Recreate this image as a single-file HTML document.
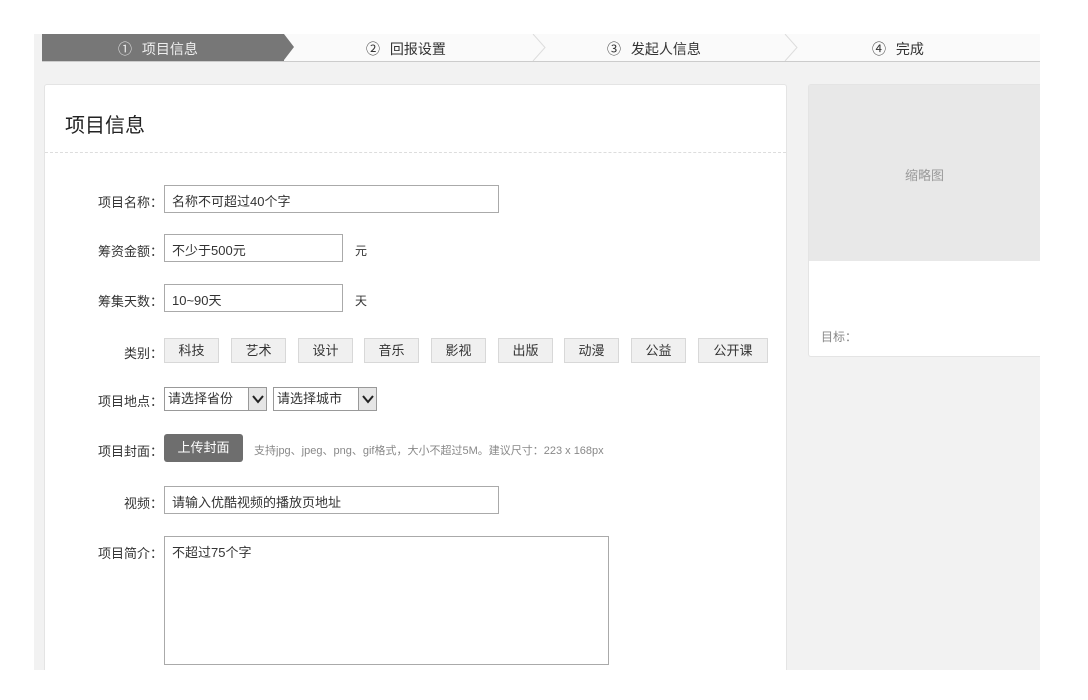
<!DOCTYPE html>
<html><head><meta charset="utf-8"><style>
*{box-sizing:border-box;margin:0;padding:0}
body{width:1088px;height:700px;background:#fff;font-family:"Liberation Sans","Noto Sans CJK SC",sans-serif;color:#333;position:relative;overflow:hidden;font-size:13px}
.bg{position:absolute;left:34px;top:34px;width:1006px;height:636px;background:#f2f2f2}
.steps{position:absolute;left:42px;top:34px;width:998px;height:28px;background:#fafafa;border-bottom:1px solid #ccc}
.act{position:absolute;left:0;top:0;width:242px;height:27px;background:#777}
.tip{position:absolute;left:242px;top:0;width:0;height:0;border-top:13.5px solid transparent;border-bottom:13.5px solid transparent;border-left:10px solid #777}
.st{position:absolute;top:5px;font-size:14px;color:#333;word-spacing:6px}
.chev{position:absolute;top:0;width:14px;height:27px}
.card{position:absolute;left:44px;top:84px;width:743px;height:586px;background:#fff;border:1px solid #e4e4e4;border-bottom:none;border-radius:3px 3px 0 0}
.title{position:absolute;left:20px;top:24px;font-size:20px;color:#222}
.dash{position:absolute;left:0;top:67px;width:100%;border-top:1px dashed #ddd}
.lbl{position:absolute;width:118px;left:0;text-align:right;font-size:13px;color:#333}
.inp{position:absolute;left:119px;height:28px;border:1px solid #aaa;padding:5px 7px;font-size:13px;color:#333;background:#fff}
.cat{position:absolute;top:253px;height:25px;background:#f0f0f0;border:1px solid #d8d8d8;font-size:13px;text-align:center;line-height:23px}
.sel{position:absolute;top:302px;height:24px;border:1px solid #999;font-size:13px;line-height:22px;padding-left:3px;background:#fff}
.sel b{position:absolute;right:0;top:0;width:18px;height:22px;border-left:1px solid #999;background:#e6e6e6}
.right{position:absolute;left:808px;top:84px;width:232px;height:273px;background:#fff;border:1px solid #e4e4e4;border-right:none;border-radius:3px 0 0 3px}
.thumb{position:absolute;left:0;top:0;width:100%;height:176px;background:#e8e8e8;text-align:center;padding-top:80px;color:#999;font-size:13px}
</style></head><body>
<div class="bg"></div>
<div class="steps">
<div class="act"></div><div class="tip"></div>
<div class="st" style="left:76px;color:#eee">① 项目信息</div>
<div class="st" style="left:324px">② 回报设置</div>
<svg class="chev" style="left:490px" viewBox="0 0 14 27"><path d="M1 0 L13 13.5 L1 27" fill="none" stroke="#ddd"/></svg>
<div class="st" style="left:565px">③ 发起人信息</div>
<svg class="chev" style="left:742px" viewBox="0 0 14 27"><path d="M1 0 L13 13.5 L1 27" fill="none" stroke="#ddd"/></svg>
<div class="st" style="left:830px">④ 完成</div>
</div>
<div class="card">
<div class="title">项目信息</div>
<div class="dash"></div>
<div class="lbl" style="top:107px">项目名称：</div>
<div class="inp" style="top:100px;width:335px">名称不可超过40个字</div>
<div class="lbl" style="top:156px">筹资金额：</div>
<div class="inp" style="top:149px;width:179px">不少于500元</div>
<div style="position:absolute;left:310px;top:157px;font-size:12px">元</div>
<div class="lbl" style="top:206px">筹集天数：</div>
<div class="inp" style="top:199px;width:179px">10~90天</div>
<div style="position:absolute;left:310px;top:207px;font-size:12px">天</div>
<div class="lbl" style="top:258px">类别：</div>
<div class="cat" style="left:119px;width:55px">科技</div>
<div class="cat" style="left:186px;width:55px">艺术</div>
<div class="cat" style="left:253px;width:55px">设计</div>
<div class="cat" style="left:319px;width:55px">音乐</div>
<div class="cat" style="left:386px;width:55px">影视</div>
<div class="cat" style="left:453px;width:55px">出版</div>
<div class="cat" style="left:519px;width:55px">动漫</div>
<div class="cat" style="left:586px;width:55px">公益</div>
<div class="cat" style="left:653px;width:70px">公开课</div>
<div class="lbl" style="top:306px">项目地点：</div>
<div class="sel" style="left:119px;width:103px">请选择省份<b><svg width="18" height="22"><path d="M4 8 L9 14 L14 8" fill="none" stroke="#222" stroke-width="2"/></svg></b></div>
<div class="sel" style="left:228px;width:104px">请选择城市<b><svg width="18" height="22"><path d="M4 8 L9 14 L14 8" fill="none" stroke="#222" stroke-width="2"/></svg></b></div>
<div class="lbl" style="top:356px">项目封面：</div>
<div style="position:absolute;left:119px;top:349px;width:79px;height:28px;background:#6e6e6e;border-radius:3px;color:#fff;text-align:center;line-height:28px;font-size:13px">上传封面</div>
<div style="position:absolute;left:209px;top:357px;font-size:11px;color:#888">支持jpg、jpeg、png、gif格式，大小不超过5M。建议尺寸：223 x 168px</div>
<div class="lbl" style="top:408px">视频：</div>
<div class="inp" style="top:401px;width:335px">请输入优酷视频的播放页地址</div>
<div class="lbl" style="top:458px">项目简介：</div>
<div class="inp" style="top:451px;width:445px;height:129px">不超过75个字</div>
</div>
<div class="right">
<div class="thumb">缩略图</div>
<div style="position:absolute;left:12px;top:243px;font-size:12px;color:#888">目标：</div>
</div>
</body></html>
